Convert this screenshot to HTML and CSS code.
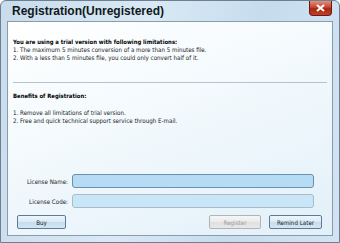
FILE: index.html
```html
<!DOCTYPE html>
<html lang="en">
<head>
    <meta charset="UTF-8">
    <title>Registration(Unregistered)</title>
    <link rel="stylesheet" href="styles.css">
</head>
<body>
    <div class="window">
        <!-- Barra de título -->
        <div class="titlebar">
            <span class="title">Registration(Unregistered)</span>
            <button class="close">
                <svg width="9" height="8" viewBox="0 0 9 8"><path d="M1 1 L8 7 M8 1 L1 7" stroke="#fff" stroke-width="2"/></svg>
            </button>
        </div>

        <div class="panel">
            <!-- Limitações -->
            <div class="section">
                <p class="heading">You are using a trial version with following limitations:</p>
                <p>1. The maximum 5 minutes conversion of a more than 5 minutes file.</p>
                <p>2. With a less than 5 minutes file, you could only convert half of it.</p>
            </div>

            <div class="sep"></div>

            <!-- Benefícios -->
            <div class="section benefits">
                <p class="heading">Benefits of Registration:</p>
                <p class="first">1. Remove all limitations of trial version.</p>
                <p>2. Free and quick technical support service through E-mail.</p>
            </div>

            <!-- Formulário -->
            <div class="form">
                <div class="row">
                    <label>License Name:</label>
                    <div class="field focused"></div>
                </div>
                <div class="row">
                    <label>License Code:</label>
                    <div class="field"></div>
                </div>
            </div>

            <div class="buttons">
                <button class="btn">Buy</button>
                <span class="spacer"></span>
                <button class="btn disabled">Register</button>
                <button class="btn">Remind Later</button>
            </div>
        </div>
    </div>
</body>
</html>
```

FILE: styles.css
```css
* {
    margin: 0;
    padding: 0;
    box-sizing: border-box;
}

body {
    width: 340px;
    height: 243px;
    font-family: 'DejaVu Sans Condensed', 'DejaVu Sans', sans-serif;
    background: #fff;
    overflow: hidden;
}

.window {
    width: 340px;
    height: 243px;
    border: 1px solid #6d7f90;
    border-radius: 6px 6px 0 0;
    background: linear-gradient(100deg, #c9dcec 0%, #d9e9f5 40%, #c6dced 70%, #d2e4f2 100%);
    padding: 0 6px 6px 6px;
    display: flex;
    flex-direction: column;
}

.titlebar {
    height: 20px;
    display: flex;
    align-items: flex-start;
    justify-content: space-between;
}

.title {
    font-family: 'Liberation Sans', sans-serif;
    font-weight: bold;
    font-size: 12px;
    color: #101820;
    padding: 3px 0 0 5px;
}

.close {
    width: 23px;
    height: 15px;
    margin-right: 1px;
    border: 1px solid #6a1a14;
    border-top: none;
    border-radius: 0 0 4px 4px;
    background: linear-gradient(#e2907e, #c8442e 45%, #a82612 55%, #c2402a);
    display: flex;
    align-items: center;
    justify-content: center;
}

.panel {
    flex: 1;
    border: 1px solid #8a9caa;
    background: linear-gradient(160deg, #ffffff 0%, #f4fafd 40%, #e2f0f9 100%);
    padding: 0 5px 0 5px;
    display: flex;
    flex-direction: column;
    font-size: 6.2px;
    color: #1a1a1a;
}

.section p {
    line-height: 8px;
}

.section {
    padding: 16px 0 0 0;
}

.heading {
    font-weight: bold;
    font-size: 5.9px;
    color: #000;
}

.sep {
    height: 1px;
    background: #b8c2ca;
    margin: 20px 0 0 0;
}

.benefits {
    padding-top: 9px;
}

.benefits .first {
    margin-top: 9px;
}

.form {
    margin-top: auto;
    display: flex;
    flex-direction: column;
    gap: 6px;
}

.row {
    display: flex;
    align-items: center;
}

.row label {
    width: 59px;
    text-align: right;
    padding-right: 4px;
}

.field {
    width: 242px;
    height: 14px;
    border: 1px solid #a8bccb;
    border-radius: 3px;
    background: #c8e6f8;
}

.field.focused {
    border-color: #6a90ad;
    background: #b6dcf5;
}

.buttons {
    display: flex;
    align-items: center;
    margin: 7px 0 6px 0;
    padding: 0 5px 0 4px;
}

.spacer {
    flex: 1;
}

.btn {
    height: 14px;
    width: 49px;
    font-family: 'DejaVu Sans Condensed', 'DejaVu Sans', sans-serif;
    font-size: 6.2px;
    color: #1a1a1a;
    border: 1px solid #5d7b93;
    border-radius: 2px;
    background: linear-gradient(#eef6fc, #dbeaf6 50%, #c6dcee 51%, #d2e6f4);
}

.btn + .btn {
    margin-left: 8px;
    width: 53px;
}

.btn.disabled {
    width: 52px;
    color: #9a9a9a;
    border-color: #aeb4b8;
    background: linear-gradient(#f6f6f6, #ebebeb 50%, #e0e0e0 51%, #e8e8e8);
}
```
